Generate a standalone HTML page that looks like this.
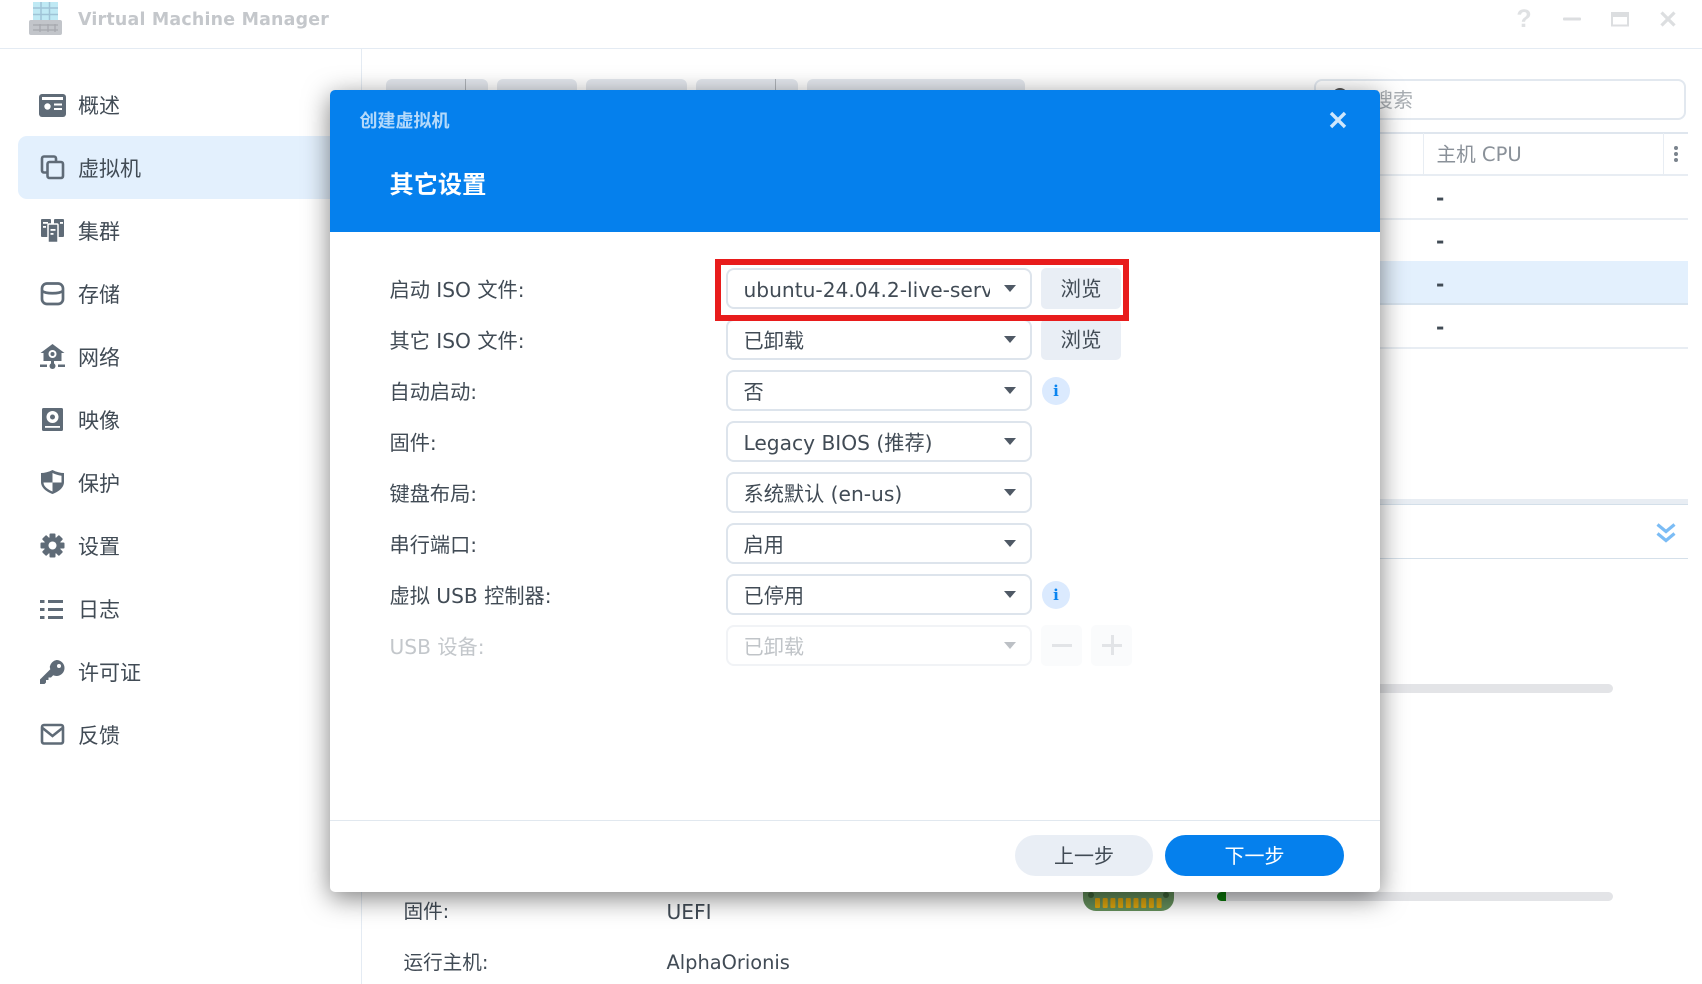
<!DOCTYPE html>
<html lang="zh-CN"><head><meta charset="utf-8"><title>Virtual Machine Manager</title>
<style>
html,body{margin:0;padding:0;width:1702px;height:984px;overflow:hidden;background:#fff}
body{position:relative;font-family:"DejaVu Sans","Noto Sans CJK SC",sans-serif;font-size:20px;color:#414b55}
div,span{box-sizing:border-box}
.a{position:absolute}
.t{position:absolute;white-space:pre;line-height:30px;height:30px}
.nav{font-size:21px;left:78px}
.tb{position:absolute;top:79px;height:30px;background:#e4e8ee;border-radius:6px}
.hl{position:absolute;left:1380px;width:308px;height:2px;background:#e8edf3}
.sel{position:absolute;left:396px;width:306px;height:41px;border:2px solid #dde4ec;border-radius:8px;background:#fff}
.sel span{position:absolute;left:15.5px;top:5px;line-height:31px;white-space:pre;font-size:20.2px}
.sel i{position:absolute;right:14px;top:15px;width:0;height:0;border-left:6.5px solid transparent;border-right:6.5px solid transparent;border-top:7px solid #4f5965}
.lb{position:absolute;left:59.5px;white-space:pre;line-height:30px;font-size:20.2px}
.br{position:absolute;left:711px;width:80px;height:41px;background:#e9eef5;border-radius:5px;text-align:center;line-height:42px;font-size:20.5px}
.info{position:absolute;left:712px;width:28px;height:28px;border-radius:50%;background:#dbeafe;color:#0a84f0;text-align:center;font:bold 15px/28px "DejaVu Serif","Liberation Serif",serif}
.d{font-weight:bold}
</style></head><body>

<!-- title bar -->
<svg class="a" style="left:26px;top:0" width="40" height="38" viewBox="0 0 40 38">
<rect x="7" y="2" width="25" height="19" fill="#bfe9f4"/>
<path d="M7 8h25M7 14.500h25M15 2v19M23.500 2v19" stroke="#9fc3d6" stroke-width="1.500"/>
<rect x="3" y="20" width="33" height="15" rx="2" fill="#c2c5ca"/>
<path d="M7 25h25M7 30h25M14 24v8M22 24v8M29 24v8" stroke="#a6a9ae" stroke-width="1.300"/>
</svg>
<div class="t" style="left:78px;top:5px;font-weight:bold;font-size:17.4px;color:#c4c7cb;letter-spacing:.22px">Virtual Machine Manager</div>
<div class="a" style="left:0;top:48px;width:1702px;height:1px;background:#e4ebf3"></div>
<div class="a" style="left:361px;top:48px;width:1px;height:936px;background:#e4ebf3"></div>
<svg class="a" style="left:1510px;top:5px" width="175" height="30" viewBox="1510 5 175 30">
<text x="1524" y="27" text-anchor="middle" font-family="Liberation Sans,sans-serif" font-size="25" font-weight="bold" fill="#dfe1e3">?</text>
<rect x="1563" y="17.500" width="18" height="3" rx="1" fill="#dcdee0"/>
<rect x="1612" y="13" width="16" height="12.500" fill="none" stroke="#dcdee0" stroke-width="2"/><rect x="1611" y="12" width="18" height="5" fill="#dcdee0"/>
<path d="M1661.500 12.500l13 13m0-13l-13 13" stroke="#dcdee0" stroke-width="3.200"/>
</svg>

<!-- sidebar -->
<div class="a" style="left:18px;top:136px;width:330px;height:63px;background:#e3f0fd;border-radius:9px"></div>
<svg class="a" style="left:0;top:0" width="80" height="760" viewBox="0 0 80 760" fill="#5f6b77">
<rect x="39" y="94" width="27" height="23" rx="3"/><rect x="42" y="97" width="21" height="3" fill="#fff"/><circle cx="47.500" cy="106.500" r="3.200" fill="#fff"/><rect x="54" y="103.500" width="8" height="2" fill="#fff"/><rect x="54" y="108" width="8" height="2" fill="#fff"/>
<g fill="none" stroke="#5f6b77" stroke-width="2.600"><path d="M47 172.500h-3a2 2 0 0 1-2-2V158.500a2 2 0 0 1 2-2h10a2 2 0 0 1 2 2V162"/><rect x="47.500" y="162" width="15.500" height="16" rx="2"/></g>
<rect x="41" y="219" width="10" height="18" rx="1"/><rect x="54" y="219" width="10" height="18" rx="1"/><rect x="48" y="224" width="10" height="18.500" rx="1" stroke="#fff" stroke-width="1.500"/><rect x="43" y="222" width="5" height="1.800" fill="#fff"/><rect x="43" y="226" width="3" height="1.800" fill="#fff"/><rect x="50.500" y="229" width="5" height="1.800" fill="#fff"/><rect x="50.500" y="233" width="3" height="1.800" fill="#fff"/><rect x="60" y="222" width="3" height="1.800" fill="#fff"/>
<g fill="none" stroke="#5f6b77" stroke-width="2.700"><rect x="42" y="283.500" width="21" height="20.500" rx="5"/><path d="M42 291c4 3 17 3 21 0"/></g>
<path d="M52.500 344l12 9h-3v8h-18v-8h-3z"/><circle cx="52.500" cy="354" r="4" fill="#fff"/><circle cx="52.500" cy="354" r="2"/><rect x="40" y="364.500" width="7" height="2.500"/><rect x="58" y="364.500" width="7" height="2.500"/><rect x="51" y="360" width="3" height="5"/><circle cx="52.500" cy="366" r="3"/>
<rect x="42" y="408" width="21" height="23" rx="1.500"/><circle cx="52.500" cy="417" r="6" fill="#fff"/><circle cx="52.500" cy="417" r="2.500"/><rect x="45" y="426" width="15" height="1.800" fill="#fff"/>
<path d="M52.500 470c4 2 8 3 11.500 3v9c0 6-6 10-11.500 12-5.500-2-11.500-6-11.500-12v-9c3.500 0 7.500-1 11.500-3z"/><path d="M52.500 473c3 1.500 6 2.400 9 2.700v6.800h-9zM52.500 482.500v9c-3.500-1.500-9-4.500-9-9z" fill="#fff"/>
<circle cx="52.500" cy="545.500" r="8.500"/><g><rect x="49.500" y="533.500" width="6" height="24" rx="1"/><rect x="49.500" y="533.500" width="6" height="24" rx="1" transform="rotate(45 52.500 545.500)"/><rect x="49.500" y="533.500" width="6" height="24" rx="1" transform="rotate(90 52.500 545.500)"/><rect x="49.500" y="533.500" width="6" height="24" rx="1" transform="rotate(135 52.500 545.500)"/></g><circle cx="52.500" cy="545.500" r="4" fill="#fff"/>
<rect x="40" y="600" width="4.500" height="3"/><rect x="48" y="600" width="15" height="3"/><rect x="40" y="608" width="4.500" height="3"/><rect x="48" y="608" width="15" height="3"/><rect x="40" y="616" width="4.500" height="3"/><rect x="48" y="616" width="15" height="3"/>
<path d="M56.500 660a8 8 0 0 1 0 16c-1.200 0-2.300-.3-3.300-.7l-2.200 2.200h-2.500v2.500h-2.500v2.500l-1.500 1.500h-4.500v-4.500l10.300-10.300c-.3-.9-.5-1.800-.5-2.700a8.500 8.500 0 0 1 6.700-6.500z"/><circle cx="59" cy="666" r="2" fill="#fff"/>
<g fill="none" stroke="#5f6b77" stroke-width="2.600"><rect x="42" y="725" width="21" height="18.500" rx="2"/><path d="M42.500 728l10 8 10-8"/></g>
</svg>
<div class="t nav" style="top:91px">概述</div>
<div class="t nav" style="top:154px">虚拟机</div>
<div class="t nav" style="top:217px">集群</div>
<div class="t nav" style="top:280px">存储</div>
<div class="t nav" style="top:343px">网络</div>
<div class="t nav" style="top:406px">映像</div>
<div class="t nav" style="top:469px">保护</div>
<div class="t nav" style="top:532px">设置</div>
<div class="t nav" style="top:595px">日志</div>
<div class="t nav" style="top:658px">许可证</div>
<div class="t nav" style="top:721px">反馈</div>

<!-- toolbar behind dialog -->
<div class="tb" style="left:386px;width:102px"></div><div class="a" style="left:465px;top:79px;width:1px;height:12px;background:#aeb2b8"></div>
<div class="tb" style="left:497px;width:80px"></div>
<div class="tb" style="left:586px;width:101px"></div>
<div class="tb" style="left:696px;width:102px"></div><div class="a" style="left:775px;top:79px;width:1px;height:12px;background:#aeb2b8"></div>
<div class="tb" style="left:807px;width:218px"></div>

<!-- search -->
<div class="a" style="left:1314px;top:79px;width:372px;height:41px;border:2px solid #e2e8ef;border-radius:8px"></div>
<div class="a" style="left:1332px;top:88px;width:16px;height:16px;border-radius:50%;background:#555"></div>
<div class="t" style="left:1373px;top:85px;color:#a9aeb3;font-size:20px">搜索</div>

<!-- table -->
<div class="hl" style="top:132px;background:#dfe6ee"></div>
<div class="hl" style="top:174px"></div>
<div class="hl" style="top:218px"></div>
<div class="a" style="left:1380px;top:261px;width:308px;height:44px;background:#e3f0fd;border-bottom:2px solid #d8e4ef"></div>
<div class="hl" style="top:347px"></div>
<div class="a" style="left:1423px;top:133px;width:1px;height:42px;background:#e8edf3"></div>
<div class="a" style="left:1663px;top:133px;width:1px;height:42px;background:#e8edf3"></div>
<div class="t" style="left:1436.5px;top:140px;color:#8a9199;font-size:19.6px">主机 CPU</div>
<svg class="a" style="left:1672px;top:145px" width="8" height="18"><circle cx="4" cy="3" r="2" fill="#7a838d"/><circle cx="4" cy="9" r="2" fill="#7a838d"/><circle cx="4" cy="15" r="2" fill="#7a838d"/></svg>
<div class="t d" style="left:1436px;top:183px">-</div>
<div class="t d" style="left:1436px;top:226px">-</div>
<div class="t d" style="left:1436px;top:269px">-</div>
<div class="t d" style="left:1436px;top:312px">-</div>

<!-- lower panel -->
<div class="a" style="left:1380px;top:499px;width:308px;height:6px;background:#e8edf3;border-bottom:1px solid #d3dfe9"></div>
<div class="a" style="left:1380px;top:558px;width:308px;height:1px;background:#d5e0ea"></div>
<svg class="a" style="left:1655px;top:521px" width="22" height="23" viewBox="0 0 22 23" fill="none" stroke="#7bbcf5" stroke-width="3.200"><path d="M2.500 3.500l8.500 7 8.500-7M2.500 12.500l8.500 7 8.500-7"/></svg>
<div class="a" style="left:1217px;top:684px;width:396px;height:9px;background:#e3e4e7;border-radius:5px"></div>
<div class="a" style="left:1217px;top:892px;width:396px;height:9px;background:#e3e4e7;border-radius:5px"></div>
<div class="a" style="left:1217px;top:892px;width:9px;height:9px;background:#0a7a0a;border-radius:5px 0 0 5px"></div>
<svg class="a" style="left:1083px;top:880px" width="91" height="32" viewBox="0 0 91 32">
<path d="M0 0h91v18a13 13 0 0 1-13 13H13A13 13 0 0 1 0 18z" fill="#648f5b"/>
<circle cx="8" cy="15" r="3" fill="#3f6539"/><circle cx="83" cy="15" r="3" fill="#3f6539"/>
<g fill="#dca50f"><rect x="12" y="18" width="5" height="10" rx="1"/><rect x="19.700" y="18" width="5" height="10" rx="1"/><rect x="27.400" y="18" width="5" height="10" rx="1"/><rect x="35.100" y="18" width="5" height="10" rx="1"/><rect x="42.800" y="18" width="5" height="10" rx="1"/><rect x="50.500" y="18" width="5" height="10" rx="1"/><rect x="58.200" y="18" width="5" height="10" rx="1"/><rect x="65.900" y="18" width="5" height="10" rx="1"/><rect x="73.600" y="18" width="5" height="10" rx="1"/></g>
</svg>
<div class="t" style="left:403.5px;top:897px;font-size:19.6px">固件:</div>
<div class="t" style="left:666.5px;top:897px;font-size:20.2px">UEFI</div>
<div class="t" style="left:403.5px;top:948px;font-size:19.6px">运行主机:</div>
<div class="t" style="left:666.5px;top:948px;font-size:19.4px">AlphaOrionis</div>

<!-- dialog -->
<div class="a" style="left:330px;top:90px;width:1050px;height:802px;background:#fff;border-radius:5px;box-shadow:0 6px 26px rgba(0,0,0,.5)">
 <div class="a" style="left:0;top:0;width:1050px;height:142px;background:#0580ed;border-radius:5px 5px 0 0"></div>
 <div class="t" style="left:29.5px;top:17px;font-size:18px;font-weight:bold;color:#b4d9fa">创建虚拟机</div>
 <div class="t" style="left:59.5px;top:80px;font-size:24.2px;font-weight:bold;color:#fff">其它设置</div>
 <svg class="a" style="left:998px;top:20px" width="20" height="20" viewBox="0 0 20 20"><path d="M3 3l14 14m0-14L3 17" stroke="#cfe7fc" stroke-width="3.400"/></svg>

 <div class="lb" style="top:185px">启动 ISO 文件:</div>
 <div class="lb" style="top:236px">其它 ISO 文件:</div>
 <div class="lb" style="top:287px">自动启动:</div>
 <div class="lb" style="top:338px">固件:</div>
 <div class="lb" style="top:389px">键盘布局:</div>
 <div class="lb" style="top:440px">串行端口:</div>
 <div class="lb" style="top:491px">虚拟 USB 控制器:</div>
 <div class="lb" style="top:542px;color:#c3c7cb">USB 设备:</div>

 <div class="sel" style="top:178px"><span style="width:246px;overflow:hidden">ubuntu-24.04.2-live-server-amd64.iso</span><i></i></div>
 <div class="sel" style="top:229px"><span>已卸载</span><i></i></div>
 <div class="sel" style="top:280px"><span>否</span><i></i></div>
 <div class="sel" style="top:331px"><span>Legacy BIOS (推荐)</span><i></i></div>
 <div class="sel" style="top:382px"><span>系统默认 (en-us)</span><i></i></div>
 <div class="sel" style="top:433px"><span>启用</span><i></i></div>
 <div class="sel" style="top:484px"><span>已停用</span><i></i></div>
 <div class="sel" style="top:535px;border-color:#f1f3f6"><span style="color:#c0c4c8">已卸载</span><i style="border-top-color:#bcc0c5"></i></div>

 <div class="br" style="top:178px">浏览</div>
 <div class="br" style="top:229px">浏览</div>
 <div class="info" style="top:287px">i</div>
 <div class="info" style="top:491px">i</div>
 <div class="a" style="left:711px;top:535px;width:41px;height:41px;background:#fafbfc;border-radius:5px"></div>
 <div class="a" style="left:761px;top:535px;width:41px;height:41px;background:#fafbfc;border-radius:5px"></div>
 <div class="a" style="left:722px;top:554px;width:20px;height:3px;background:#e2e4e7"></div>
 <div class="a" style="left:772px;top:554px;width:20px;height:3px;background:#e2e4e7"></div>
 <div class="a" style="left:780.500px;top:545px;width:3px;height:20px;background:#e2e4e7"></div>

 <div class="a" style="left:385px;top:169px;width:414px;height:62px;border:6px solid #e81c1c"></div>

 <div class="a" style="left:0;top:730px;width:1050px;height:1px;background:#e1e8ef"></div>
 <div class="a" style="left:685px;top:745px;width:138px;height:41px;border-radius:21px;background:#e9eef5;text-align:center;line-height:43px;font-size:20px">上一步</div>
 <div class="a" style="left:835px;top:745px;width:179px;height:41px;border-radius:21px;background:#0580ed;color:#fff;text-align:center;line-height:43px;font-size:20px">下一步</div>
</div>
</body></html>
